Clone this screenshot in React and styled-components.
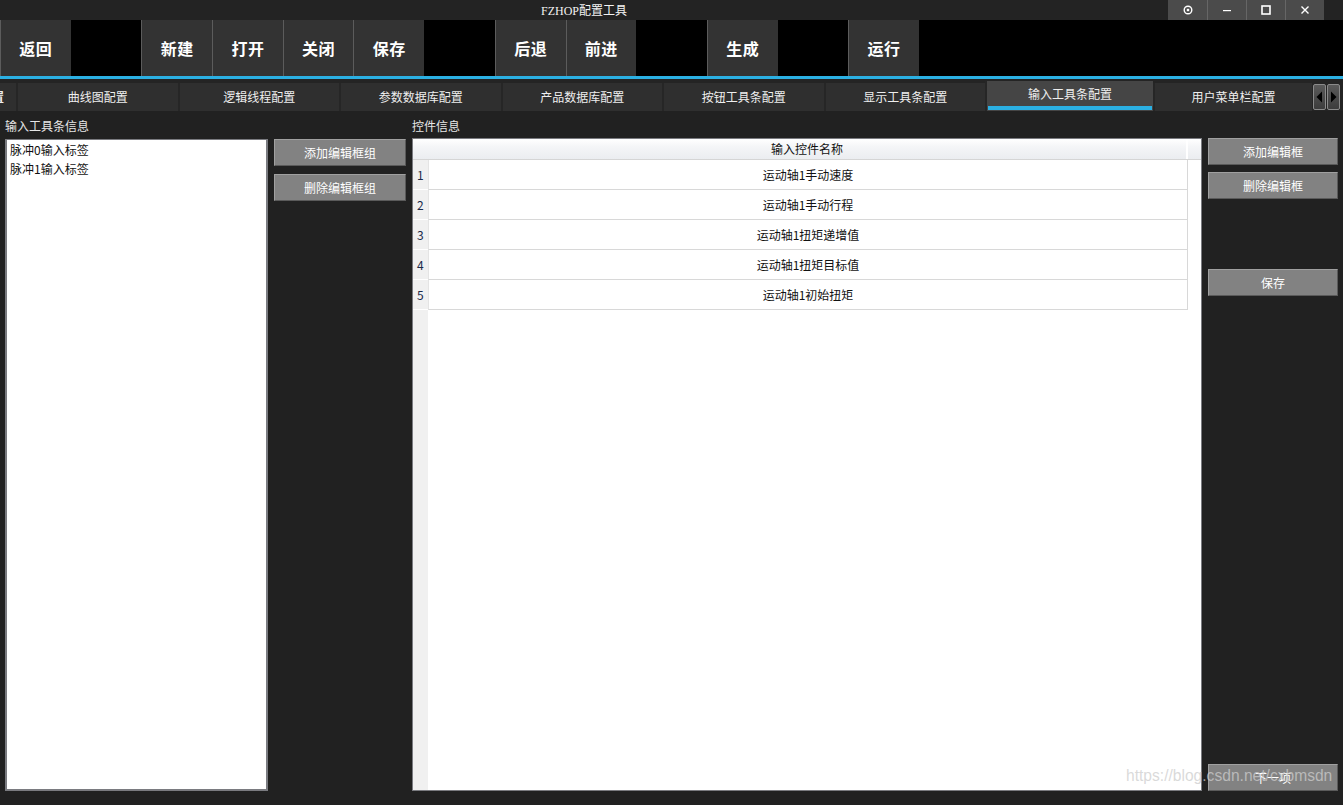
import React from "react";
import styled, { createGlobalStyle } from "styled-components";

const CJK = `"Noto Sans CJK SC", "Liberation Sans", sans-serif`;

const GlobalStyle = createGlobalStyle`
  html, body {
    margin: 0;
    padding: 0;
    background: #212121;
  }
  body {
    font-family: ${CJK};
    overflow: hidden;
  }
`;

const Window = styled.div`
  position: relative;
  width: 1343px;
  height: 805px;
  display: flex;
  flex-direction: column;
  background: #212121;
`;

const TitleBar = styled.div`
  height: 20px;
  display: flex;
  background: #232323;
`;

const TitleText = styled.div`
  flex: 1;
  display: flex;
  align-items: center;
  justify-content: center;
  color: #f2f2f2;
  font-family: "Liberation Serif", "Noto Sans CJK SC", serif;
  font-size: 12px;
`;

const WinControls = styled.div`
  display: flex;
  margin-right: 19px;
`;

const WinButton = styled.div`
  width: 38px;
  height: 20px;
  background: #4b4b4b;
  border-left: 1px solid #666;
  display: flex;
  align-items: center;
  justify-content: center;
  &:first-child {
    border-left: none;
    width: 39px;
  }
`;

const Toolbar = styled.div`
  height: 56px;
  display: flex;
  background: #000;
`;

const ToolButton = styled.div`
  width: 70.7px;
  box-sizing: border-box;
  height: 56px;
  background: #333;
  border-left: 1px solid #5c5c5c;
  color: #fff;
  font-weight: bold;
  font-size: 16px;
  display: flex;
  align-items: center;
  justify-content: center;
  letter-spacing: 0.5px;
`;

const ToolGap = styled.div`
  width: 70.7px;
  height: 56px;
`;

const BlueLine = styled.div`
  height: 3px;
  background: #2bb0e3;
`;

const TabBar = styled.div`
  height: 32px;
  display: flex;
  align-items: flex-end;
  background: #242424;
`;

const Tab = styled.div`
  position: relative;
  box-sizing: border-box;
  width: ${(p) => p.$w}px;
  height: ${(p) => (p.$active ? 30 : 28)}px;
  background: ${(p) => (p.$active ? "#454545" : "#2f2f2f")};
  border-left: 2px solid #262626;
  color: #eee;
  font-size: 12px;
  display: flex;
  align-items: center;
  justify-content: center;
  padding-bottom: ${(p) => (p.$active ? 6 : 1)}px;
  overflow: hidden;
  white-space: nowrap;
  &:first-child {
    border-left: none;
    justify-content: flex-start;
  }
`;

const PartialLabel = styled.span`
  margin-left: -8px;
  font-weight: bold;
`;

const ActiveBar = styled.div`
  position: absolute;
  left: 1px;
  right: 1px;
  bottom: 1px;
  height: 4px;
  background: #2bb0e3;
`;

const ScrollArrows = styled.div`
  display: flex;
  gap: 1px;
  height: 28px;
  padding-left: 1px;
  align-items: center;
`;

const ArrowButton = styled.div`
  width: 13px;
  height: 26px;
  box-sizing: border-box;
  border: 1px solid #8a8a8a;
  border-radius: 2px;
  background: linear-gradient(#5a5a5a, #3c3c3c);
  display: flex;
  align-items: center;
  justify-content: center;
`;

const Main = styled.div`
  flex: 1;
  display: grid;
  grid-template-columns: 263px 132px 790px 130px;
  grid-template-rows: 28px 652px;
  column-gap: 6px;
  padding: 0 5px 14px 5px;
`;

const SectionLabel = styled.div`
  color: #e6e6e6;
  font-size: 12px;
  display: flex;
  align-items: center;
  padding-top: 1px;
  grid-column: ${(p) => p.$col};
`;

const ListBox = styled.div`
  grid-column: 1;
  box-sizing: border-box;
  background: #fff;
  border: 2px solid #7a7b80;
  border-top-width: 1px;
  padding: 0 3px;
`;

const ListItem = styled.div`
  font-size: 12px;
  color: #111;
  line-height: 19px;
`;

const ButtonCol = styled.div`
  display: flex;
  flex-direction: column;
  gap: ${(p) => p.$gap || 8}px;
`;

const GrayButton = styled.div`
  height: 27px;
  box-sizing: border-box;
  background: #828282;
  border: 1px solid #5a5a5a;
  border-top-color: #a0a0a0;
  border-left-color: #a0a0a0;
  color: #fff;
  font-size: 12px;
  display: flex;
  align-items: center;
  justify-content: center;
  margin-top: ${(p) => p.$mt || 0}px;
`;

const Spacer = styled.div`
  flex: 1;
`;

const TableBox = styled.div`
  box-sizing: border-box;
  border: 1px solid #7a7b80;
  background: #fff;
  display: flex;
  flex-direction: column;
  margin-top: -1px;
`;

const HeaderRow = styled.div`
  display: grid;
  grid-template-columns: 15px 760px 1fr;
  height: 20px;
  background: linear-gradient(#ffffff 0%, #f4f5f7 40%, #ebedf0 100%);
  border-bottom: 1px solid #d5d5d5;
`;

const HeaderCell = styled.div`
  font-size: 12px;
  color: #111;
  display: flex;
  align-items: center;
  justify-content: center;
  padding-bottom: 1px;
  border-right: ${(p) => (p.$line ? "2px solid #fff" : "none")};
`;

const Body = styled.div`
  flex: 1;
  display: grid;
  grid-template-columns: 15px 760px 1fr;
  grid-auto-rows: 30px;
  align-content: start;
  background: linear-gradient(to right, #f0f0f0 15px, #fff 15px);
`;

const RowNum = styled.div`
  font-size: 12px;
  color: #1a2a4a;
  display: flex;
  align-items: center;
  padding-left: 4px;
  padding-bottom: 1px;
  border-bottom: 1px solid #fff;
`;

const Cell = styled.div`
  font-size: 12px;
  color: #111;
  display: flex;
  align-items: center;
  justify-content: center;
  padding-bottom: 1px;
  border-bottom: 1px solid #d8d8d8;
  border-right: 1px solid #d8d8d8;
  border-left: 1px solid #e4e4e4;
`;

const Filler = styled.div``;

const Watermark = styled.div`
  position: absolute;
  z-index: 5;
  left: 1126px;
  top: 767px;
  font-family: "Liberation Sans", Arial, sans-serif;
  font-size: 15.6px;
  color: rgba(205, 205, 205, 0.75);
  pointer-events: none;
`;

const toolItems = [
  "返回", null, "新建", "打开", "关闭", "保存", null,
  "后退", "前进", null, "生成", null, "运行",
];

const tabs = [
  { label: "置", w: 16, partial: true },
  { label: "曲线图配置", w: 161.5 },
  { label: "逻辑线程配置", w: 161.5 },
  { label: "参数数据库配置", w: 161.5 },
  { label: "产品数据库配置", w: 161.5 },
  { label: "按钮工具条配置", w: 161.5 },
  { label: "显示工具条配置", w: 161.5 },
  { label: "输入工具条配置", w: 168, active: true },
  { label: "用户菜单栏配置", w: 159 },
];

const rows = [
  "运动轴1手动速度",
  "运动轴1手动行程",
  "运动轴1扭矩递增值",
  "运动轴1扭矩目标值",
  "运动轴1初始扭矩",
];

export default function App() {
  return (
    <Window>
      <GlobalStyle />
      <TitleBar>
        <TitleText>FZHOP配置工具</TitleText>
        <WinControls>
          <WinButton>
            <svg width="10" height="10" viewBox="0 0 10 10">
              <circle cx="5" cy="5" r="3.8" fill="none" stroke="#fff" strokeWidth="1.4" />
              <rect x="3.8" y="3.8" width="2.4" height="2.4" fill="#fff" />
            </svg>
          </WinButton>
          <WinButton>
            <svg width="10" height="10" viewBox="0 0 10 10">
              <rect x="1" y="5" width="8" height="1.2" fill="#fff" />
            </svg>
          </WinButton>
          <WinButton>
            <svg width="10" height="10" viewBox="0 0 10 10">
              <rect x="1" y="1" width="8" height="8" fill="none" stroke="#fff" strokeWidth="1.6" />
            </svg>
          </WinButton>
          <WinButton>
            <svg width="10" height="10" viewBox="0 0 10 10">
              <path d="M1.5 1.5 L8.5 8.5 M8.5 1.5 L1.5 8.5" stroke="#fff" strokeWidth="1.4" />
            </svg>
          </WinButton>
        </WinControls>
      </TitleBar>

      <Toolbar>
        {toolItems.map((t, i) =>
          t ? <ToolButton key={i}>{t}</ToolButton> : <ToolGap key={i} />
        )}
      </Toolbar>
      <BlueLine />

      <TabBar>
        {tabs.map((t, i) => (
          <Tab key={i} $w={t.w} $active={t.active}>
            {t.partial ? <PartialLabel>{t.label}</PartialLabel> : <span>{t.label}</span>}
            {t.active && <ActiveBar />}
          </Tab>
        ))}
        <ScrollArrows>
          <ArrowButton>
            <svg width="7" height="12" viewBox="0 0 7 12">
              <path d="M6 0.5 L0.5 6 L6 11.5 Z" fill="#000" />
            </svg>
          </ArrowButton>
          <ArrowButton>
            <svg width="7" height="12" viewBox="0 0 7 12">
              <path d="M1 0.5 L6.5 6 L1 11.5 Z" fill="#000" />
            </svg>
          </ArrowButton>
        </ScrollArrows>
      </TabBar>

      <Main>
        <SectionLabel $col="1 / 3">输入工具条信息</SectionLabel>
        <SectionLabel $col="3 / 5">控件信息</SectionLabel>

        <ListBox>
          <ListItem>脉冲0输入标签</ListItem>
          <ListItem>脉冲1输入标签</ListItem>
        </ListBox>

        <ButtonCol $gap={8}>
          <GrayButton>添加编辑框组</GrayButton>
          <GrayButton>删除编辑框组</GrayButton>
        </ButtonCol>

        <TableBox>
          <HeaderRow>
            <HeaderCell />
            <HeaderCell $line>输入控件名称</HeaderCell>
            <HeaderCell />
          </HeaderRow>
          <Body>
            {rows.map((r, i) => (
              <React.Fragment key={i}>
                <RowNum>{i + 1}</RowNum>
                <Cell>{r}</Cell>
                <Filler />
              </React.Fragment>
            ))}
          </Body>
        </TableBox>

        <ButtonCol $gap={7}>
          <GrayButton $mt={-1}>添加编辑框</GrayButton>
          <GrayButton>删除编辑框</GrayButton>
          <GrayButton $mt={63}>保存</GrayButton>
          <Spacer />
          <GrayButton>下一项</GrayButton>
        </ButtonCol>
      </Main>

      <Watermark>https://blog.csdn.net/cxbmsdn</Watermark>
    </Window>
  );
}
